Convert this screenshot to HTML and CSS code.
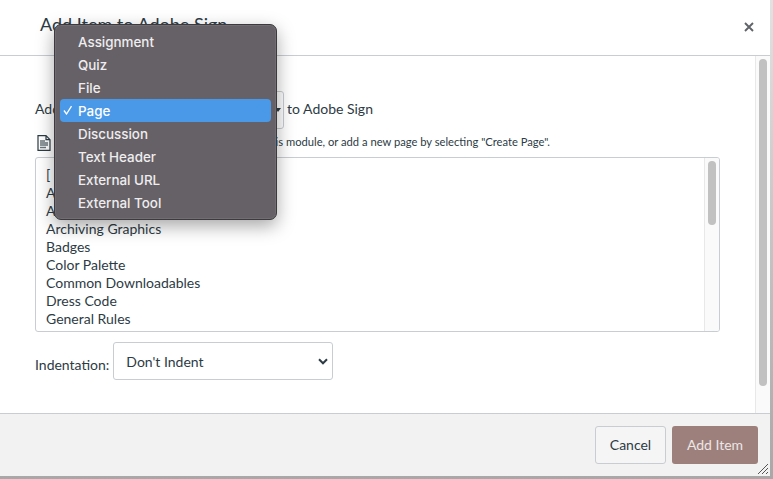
FILE: index.html
```html
<!DOCTYPE html>
<html lang="en">
<head>
<meta charset="utf-8">
<title>Add Item to Adobe Sign</title>
<link rel="stylesheet" href="styles.css">
</head>
<body>
<div class="dialog">
  <header class="dialog-header">
    <h1 class="dialog-title">Add Item to Adobe Sign</h1>
    <svg class="close-icon" width="10" height="10" viewBox="0 0 10 10"><path d="M1 1l8 8M9 1l-8 8" stroke="#5f6468" stroke-width="1.9" fill="none"/></svg>
  </header>
  <div class="dialog-main">
    <div class="dialog-body">
      <div class="add-row">
        <span>Add</span>
        <div class="type-select"><svg class="type-caret" width="6" height="4" viewBox="0 0 6 4"><path d="M0 0h6L3 4z" fill="#2d3b45"/></svg></div>
        <span class="add-suffix">to Adobe Sign</span>
      </div>
      <div class="hint-row">
        <svg class="page-icon" width="14" height="16" viewBox="0 0 14 16"><path d="M1 .7h8l4 4v10.600H1zM9 .7v4h4" fill="none" stroke="#2d3b45" stroke-width="1.2"/><path d="M3 6h5M3 8h8M3 10h8M3 12.500h6" stroke="#6a747b" stroke-width="1.400" fill="none"/></svg>
        <span class="hint-text">Select the page you want to associate with this module, or add a new page by selecting "Create Page".</span>
      </div>
      <div class="list-box">
        <ul class="list-items">
          <li>[ Create Page ]</li>
          <li>About</li>
          <li>Accessibility</li>
          <li>Archiving Graphics</li>
          <li>Badges</li>
          <li>Color Palette</li>
          <li>Common Downloadables</li>
          <li>Dress Code</li>
          <li>General Rules</li>
        </ul>
        <div class="scrollbar list-scrollbar"><div class="thumb list-thumb"></div></div>
      </div>
      <div class="indent-row">
        <span class="indent-label">Indentation:</span>
        <div class="indent-select">
          <span>Don't Indent</span>
          <svg width="10" height="7" viewBox="0 0 10 7"><path d="M1 1.300l4 4 4-4" fill="none" stroke="#2d3b45" stroke-width="2"/></svg>
        </div>
      </div>
    </div>
    <div class="scrollbar body-scrollbar"><div class="thumb body-thumb"></div></div>
  </div>
  <footer class="dialog-footer">
    <button class="btn btn-cancel">Cancel</button>
    <button class="btn btn-add">Add Item</button>
    <svg class="resize-handle" width="12" height="12" viewBox="0 0 12 12"><path d="M1 11L11 1M5 11l6-6M9 11l2-2" stroke="#555" stroke-width="1" fill="none"/></svg>
  </footer>
</div>
<div class="menu">
  <div class="menu-item">Assignment</div>
  <div class="menu-item">Quiz</div>
  <div class="menu-item">File</div>
  <div class="menu-item selected"><svg class="check" width="10" height="10" viewBox="0 0 10 10"><path d="M1 5.500l2.500 3.500L8.500 1.200" fill="none" stroke="#fff" stroke-width="1.300"/></svg>Page</div>
  <div class="menu-item">Discussion</div>
  <div class="menu-item">Text Header</div>
  <div class="menu-item">External URL</div>
  <div class="menu-item">External Tool</div>
</div>
</body>
</html>
```

FILE: styles.css
```css
* { box-sizing: border-box; }
html, body { margin: 0; height: 100%; }
body {
  background: linear-gradient(#e2e2e2, #a8a8a8);
  font-family: Lato, "Liberation Sans", sans-serif;
  font-size: 14px;
  color: #2d3b45;
  overflow: hidden;
  position: relative;
}
.dialog {
  width: 770px;
  height: 476px;
  background: #fff;
  display: flex;
  flex-direction: column;
  position: relative;
}
.dialog-header {
  height: 56px;
  flex: none;
  border-bottom: 1px solid #c7cdd1;
  display: flex;
  align-items: center;
  justify-content: space-between;
  padding: 0 16px 2px 40px;
}
.dialog-title {
  margin: 0;
  font-size: 18px;
  font-weight: 400;
  position: relative;
  top: -3px;
}
.dialog-main {
  flex: 1;
  min-height: 0;
  display: flex;
}
.dialog-body {
  flex: 1;
  min-width: 0;
  padding: 35px 35px 0;
}
.add-row {
  display: flex;
  align-items: center;
  height: 38px;
  line-height: 18px;
}
.add-row > span { position: relative; top: -1px; }
.type-select {
  width: 223px;
  height: 38px;
  margin-left: 1px;
  border: 1px solid #c7cdd1;
  border-radius: 3px;
  display: flex;
  align-items: center;
  justify-content: flex-end;
  padding-right: 2px;
}
.add-suffix { margin-left: 3px; }
.hint-row {
  display: flex;
  align-items: center;
  height: 28px;
}
.hint-text {
  font-size: 11.200px;
  margin-left: 3px;
  white-space: nowrap;
  position: relative;
  top: -2px;
}
.page-icon { margin-left: 2px; }
.list-box {
  width: 685px;
  height: 175px;
  border: 1px solid #c7cdd1;
  border-radius: 3px;
  display: flex;
  overflow: hidden;
}
.list-items {
  flex: 1;
  list-style: none;
  margin: 0;
  padding: 8px 10px 0;
  line-height: 18px;
}
.scrollbar {
  flex: none;
  width: 15px;
  background: #fafafa;
  border-left: 1px solid #e8e8e8;
}
.thumb {
  width: 8px;
  margin-left: 3px;
  border-radius: 4px;
  background: #c1c1c1;
}
.list-thumb { height: 64px; margin-top: 3px; }
.body-thumb { height: 327px; margin-top: 3px; }
.indent-row {
  display: flex;
  align-items: flex-end;
  margin-top: 10px;
}
.indent-label { margin-right: 3px; line-height: 20px; margin-bottom: 5px; }
.indent-select {
  width: 220px;
  margin-left: 1px;
  height: 38px;
  border: 1px solid #c7cdd1;
  border-radius: 3px;
  display: flex;
  align-items: center;
  justify-content: space-between;
  padding: 2px 4px 1px 12px;
  background: #fff;
}
.dialog-footer {
  height: 63px;
  flex: none;
  background: #f2f2f2;
  border-top: 1px solid #c7cdd1;
  display: flex;
  justify-content: flex-end;
  align-items: flex-start;
  gap: 6px;
  padding: 12px 12px 0 0;
  position: relative;
}
.btn {
  height: 38px;
  border-radius: 3px;
  font: 14px Lato, "Liberation Sans", sans-serif;
  padding: 0 0 2px;
}
.btn-cancel {
  width: 71px;
  background: #f5f5f5;
  color: #2d3b45;
  border: 1px solid #c7cdd1;
}
.btn-add {
  width: 86px;
  background: #9d807c;
  color: #ece6e5;
  border: 0;
}
.resize-handle {
  position: absolute;
  right: 1px;
  bottom: 1px;
}
.menu {
  position: absolute;
  left: 54px;
  top: 24px;
  width: 223px;
  height: 196px;
  padding: 5px 5px;
  border-radius: 7px;
  background: #656166;
  border: 1px solid #3c3a3d;
  box-shadow: 0 6px 18px rgba(0,0,0,.35), inset 0 0 0 1px rgba(255,255,255,.08);
  font-family: Inter, "Liberation Sans", sans-serif;
  font-size: 13.400px;
  font-weight: 500;
  color: #efedef;
}
.menu-item {
  height: 23px;
  line-height: 25px;
  padding-left: 18px;
  border-radius: 4px;
  position: relative;
}
.menu-item.selected { background: #4a98e8; color: #fff; }
.check {
  position: absolute;
  left: 3px;
  top: 6px;
}
```
